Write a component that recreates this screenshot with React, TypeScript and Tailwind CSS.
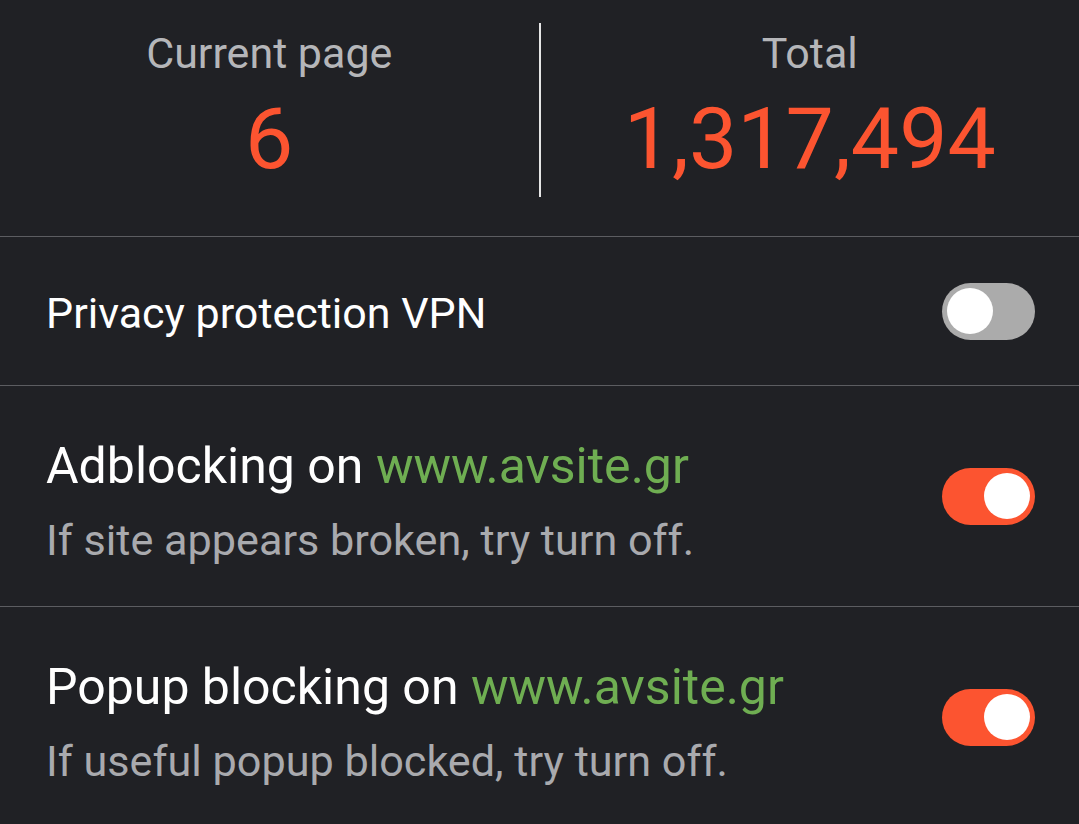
import { useState } from 'react'

type ToggleProps = {
  on: boolean
  onChange: () => void
}

function Toggle({ on, onChange }: ToggleProps) {
  return (
    <button
      onClick={onChange}
      className={`flex h-[57px] w-[93px] shrink-0 items-center rounded-full px-[5px] ${
        on ? 'justify-end bg-[#fc5430]' : 'justify-start bg-[#ababab]'
      }`}
    >
      <span className="h-[46px] w-[46px] rounded-full bg-white" />
    </button>
  )
}

type RowProps = {
  title: string
  site: string
  hint: string
  on: boolean
  onChange: () => void
}

function SiteRow({ title, site, hint, on, onChange }: RowProps) {
  return (
    <div className="flex items-center justify-between border-b border-[#5c5d61] pl-[46px] pr-[44px]">
      <div className="pt-[50px] pb-[40px]">
        <p className="whitespace-nowrap text-[50px] leading-[60px] text-white">
          {title} <span className="text-[#6fae52]">{site}</span>
        </p>
        <p className="mt-[20px] whitespace-nowrap text-[43.2px] leading-[50px] text-[#a9aaae]">{hint}</p>
      </div>
      <Toggle on={on} onChange={onChange} />
    </div>
  )
}

export default function App() {
  const [vpn, setVpn] = useState(false)
  const [adblock, setAdblock] = useState(true)
  const [popup, setPopup] = useState(true)

  return (
    <div className="h-[824px] w-[1079px] overflow-hidden bg-[#202125] font-['Roboto','Liberation_Sans',sans-serif]">
      <div className="flex h-[237px] border-b border-[#5c5d61]">
        <div className="flex flex-1 flex-col items-center pt-[27px]">
          <span className="text-[43px] leading-[52px] text-[#b5b6b9]">Current page</span>
          <span className="mt-[10px] text-[86px] leading-[100px] text-[#fc5430]">6</span>
        </div>
        <div className="mt-[23px] h-[174px] w-[2px] bg-[#e6e6e6]" />
        <div className="flex flex-1 flex-col items-center pt-[27px]">
          <span className="text-[43px] leading-[52px] text-[#b5b6b9]">Total</span>
          <span className="mt-[10px] text-[86px] leading-[100px] text-[#fc5430]">1,317,494</span>
        </div>
      </div>

      <div className="flex h-[149px] items-center justify-between border-b border-[#5c5d61] pl-[46px] pr-[44px]">
        <p className="pt-[4px] text-[43px] leading-[52px] text-white">Privacy protection VPN</p>
        <Toggle on={vpn} onChange={() => setVpn(!vpn)} />
      </div>

      <SiteRow
        title="Adblocking on"
        site="www.avsite.gr"
        hint="If site appears broken, try turn off."
        on={adblock}
        onChange={() => setAdblock(!adblock)}
      />
      <SiteRow
        title="Popup blocking on"
        site="www.avsite.gr"
        hint="If useful popup blocked, try turn off."
        on={popup}
        onChange={() => setPopup(!popup)}
      />
    </div>
  )
}
